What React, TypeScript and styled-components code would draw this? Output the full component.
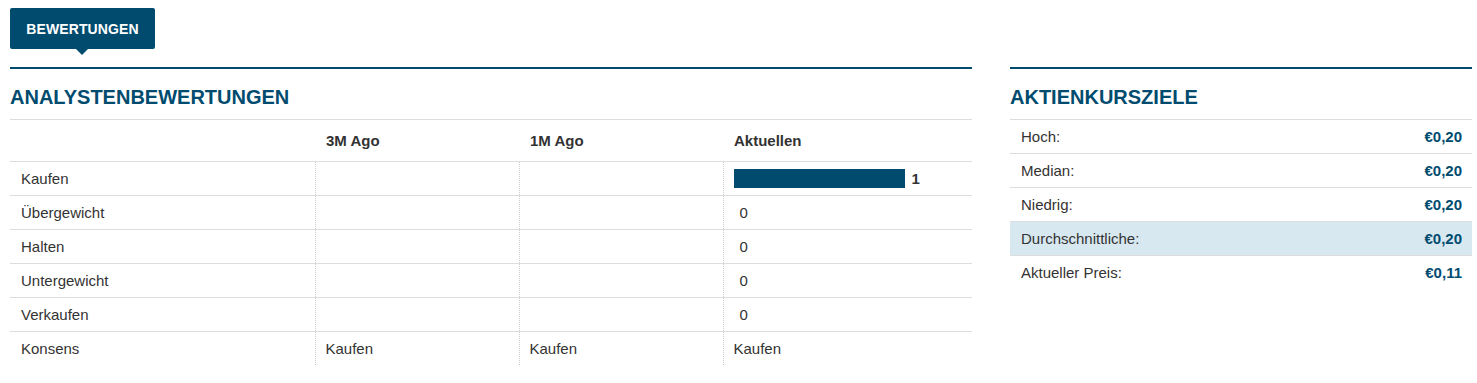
import React from "react";
import styled, { createGlobalStyle } from "styled-components";

const NAVY = "#004b6e";

const Global = createGlobalStyle`
  html, body { margin: 0; padding: 0; background: #fff; }
  body { font-family: "Liberation Sans", Arial, sans-serif; color: #333; }
`;

const Page = styled.div`
  padding: 8px 5px 0 10px;
  width: 1477px;
  box-sizing: border-box;
`;

const TabBar = styled.div`
  display: flex;
  margin-bottom: 18px;
`;

const Tab = styled.div`
  position: relative;
  height: 41px;
  width: 145px;
  box-sizing: border-box;
  display: flex;
  align-items: center;
  justify-content: center;
  background: ${NAVY};
  color: #fff;
  font-size: 14px;
  font-weight: 700;
  letter-spacing: 0.1px;
  border-radius: 2px;
  &::after {
    content: "";
    position: absolute;
    left: 66px;
    bottom: -6px;
    border-left: 6px solid transparent;
    border-right: 6px solid transparent;
    border-top: 6px solid ${NAVY};
  }
`;

const Columns = styled.div`
  display: grid;
  grid-template-columns: 962px 462px;
  column-gap: 38px;
`;

const Section = styled.section`
  border-top: 2px solid ${NAVY};
`;

const Heading = styled.h2`
  margin: 0;
  padding: 17px 0 11px;
  line-height: 22px;
  font-size: 20px;
  font-weight: 700;
  color: ${NAVY};
`;

const Table = styled.table`
  width: 100%;
  border-collapse: collapse;
  font-size: 15px;
  table-layout: fixed;
`;

const HeadCell = styled.th<{ $w?: number }>`
  box-sizing: border-box;
  width: ${(p) => (p.$w ? `${p.$w}px` : "auto")};
  height: 42px;
  padding: 0 11px;
  text-align: left;
  font-weight: 700;
  color: #333;
  border-top: 1px solid #ddd;
  border-bottom: 1px solid #ddd;
`;

const Row = styled.tr`
  border-bottom: 1px solid #ddd;
  &:last-child { border-bottom: none; }
`;

const Cell = styled.td<{ $first?: boolean }>`
  height: 33px;
  padding: 0 11px 0 ${(p) => (p.$first ? "11px" : "10px")};
  color: #333;
  border-left: ${(p) => (p.$first ? "none" : "1px dotted #ccc")};
  vertical-align: middle;
`;

const BarWrap = styled.div`
  display: flex;
  align-items: center;
  gap: 6px;
`;

const Bar = styled.div`
  height: 19px;
  background: ${NAVY};
`;

const Count = styled.span<{ $bold?: boolean }>`
  font-weight: ${(p) => (p.$bold ? 700 : 400)};
  margin-left: ${(p) => (p.$bold ? "1px" : "0")};
`;

const TargetTable = styled.div`
  border-top: 1px solid #ddd;
  font-size: 15px;
`;

const TargetRow = styled.div<{ $hl?: boolean }>`
  display: flex;
  justify-content: space-between;
  align-items: center;
  height: 33px;
  padding: 0 10px 0 11px;
  border-bottom: 1px solid #ddd;
  background: ${(p) => (p.$hl ? "#d7e8f1" : "transparent")};
  &:last-child { border-bottom: none; }
`;

const Label = styled.span`
  color: #333;
`;

const Value = styled.span`
  font-weight: 700;
  color: ${NAVY};
`;

const ratings = [
  { name: "Kaufen", count: 1 },
  { name: "Übergewicht", count: 0 },
  { name: "Halten", count: 0 },
  { name: "Untergewicht", count: 0 },
  { name: "Verkaufen", count: 0 },
];

const targets = [
  { label: "Hoch:", value: "€0,20" },
  { label: "Median:", value: "€0,20" },
  { label: "Niedrig:", value: "€0,20" },
  { label: "Durchschnittliche:", value: "€0,20", hl: true },
  { label: "Aktueller Preis:", value: "€0,11" },
];

const MAX_BAR = 171;

export default function App() {
  const max = Math.max(...ratings.map((r) => r.count));
  return (
    <Page>
      <Global />
      <TabBar>
        <Tab>BEWERTUNGEN</Tab>
      </TabBar>
      <Columns>
        <Section>
          <Heading>ANALYSTENBEWERTUNGEN</Heading>
          <Table>
            <thead>
              <tr>
                <HeadCell $w={305}></HeadCell>
                <HeadCell $w={204}>3M Ago</HeadCell>
                <HeadCell $w={204}>1M Ago</HeadCell>
                <HeadCell>Aktuellen</HeadCell>
              </tr>
            </thead>
            <tbody>
              {ratings.map((r) => (
                <Row key={r.name}>
                  <Cell $first>{r.name}</Cell>
                  <Cell></Cell>
                  <Cell></Cell>
                  <Cell>
                    <BarWrap>
                      <Bar style={{ width: max ? (r.count / max) * MAX_BAR : 0 }} />
                      <Count $bold={r.count > 0}>{r.count}</Count>
                    </BarWrap>
                  </Cell>
                </Row>
              ))}
              <Row>
                <Cell $first>Konsens</Cell>
                <Cell>Kaufen</Cell>
                <Cell>Kaufen</Cell>
                <Cell>Kaufen</Cell>
              </Row>
            </tbody>
          </Table>
        </Section>
        <Section>
          <Heading>AKTIENKURSZIELE</Heading>
          <TargetTable>
            {targets.map((t) => (
              <TargetRow key={t.label} $hl={t.hl}>
                <Label>{t.label}</Label>
                <Value>{t.value}</Value>
              </TargetRow>
            ))}
          </TargetTable>
        </Section>
      </Columns>
    </Page>
  );
}
